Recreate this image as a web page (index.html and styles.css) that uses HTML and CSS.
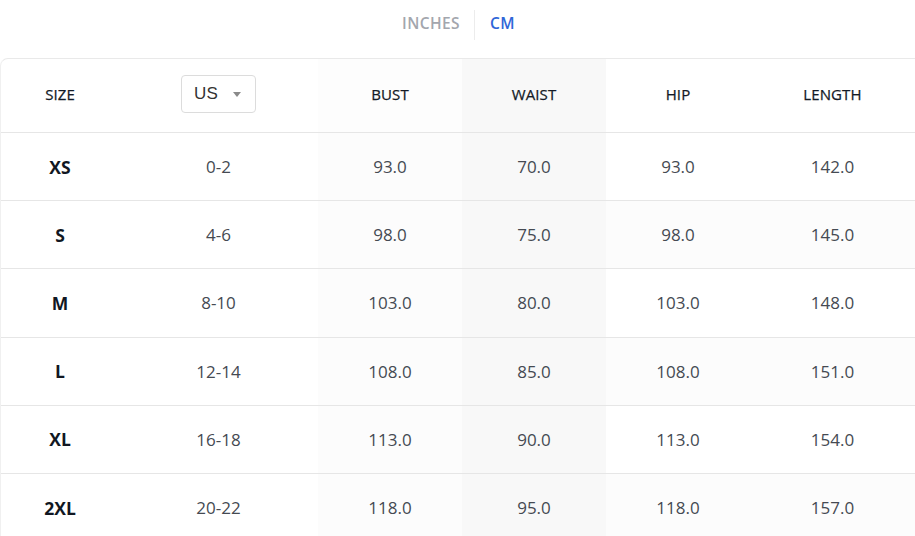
FILE: index.html
```html
<!DOCTYPE html>
<html>
<head>
<meta charset="utf-8">
<link rel="stylesheet" href="styles.css">
</head>
<body>
<div class="units">
  <span class="unit">INCHES</span>
  <span class="sep"></span>
  <span class="unit active">CM</span>
</div>
<div class="table">
  <div class="row head">
    <div class="cell">SIZE</div>
    <div class="cell">
      <div class="select"><span>US</span><svg class="caret" width="8" height="5" viewBox="0 0 8 5"><path d="M0 0h8L4 5z" fill="#8a8a8a"/></svg></div>
    </div>
    <div class="cell bust">BUST</div>
    <div class="cell waist">WAIST</div>
    <div class="cell">HIP</div>
    <div class="cell">LENGTH</div>
  </div>
  <div class="row">
    <div class="cell size">XS</div><div class="cell">0-2</div><div class="cell bust">93.0</div><div class="cell waist">70.0</div><div class="cell">93.0</div><div class="cell">142.0</div>
  </div>
  <div class="row alt">
    <div class="cell size">S</div><div class="cell">4-6</div><div class="cell bust">98.0</div><div class="cell waist">75.0</div><div class="cell">98.0</div><div class="cell">145.0</div>
  </div>
  <div class="row">
    <div class="cell size">M</div><div class="cell">8-10</div><div class="cell bust">103.0</div><div class="cell waist">80.0</div><div class="cell">103.0</div><div class="cell">148.0</div>
  </div>
  <div class="row alt">
    <div class="cell size">L</div><div class="cell">12-14</div><div class="cell bust">108.0</div><div class="cell waist">85.0</div><div class="cell">108.0</div><div class="cell">151.0</div>
  </div>
  <div class="row">
    <div class="cell size">XL</div><div class="cell">16-18</div><div class="cell bust">113.0</div><div class="cell waist">90.0</div><div class="cell">113.0</div><div class="cell">154.0</div>
  </div>
  <div class="row alt">
    <div class="cell size">2XL</div><div class="cell">20-22</div><div class="cell bust">118.0</div><div class="cell waist">95.0</div><div class="cell">118.0</div><div class="cell">157.0</div>
  </div>
</div>
</body>
</html>
```
FILE: styles.css
```css
* { box-sizing: border-box; }
html, body { margin: 0; padding: 0; background: #fff; }
body { font-family: "Open Sans", "Noto Sans", sans-serif; color: #222; overflow: hidden; }

.units {
  height: 58px;
  display: flex;
  align-items: center;
  justify-content: center;
  padding-bottom: 13px;
  padding-left: 2px;
}
.unit {
  font-size: 15.5px;
  font-weight: 600;
  letter-spacing: 0.4px;
  color: #a3a6ad;
}
.unit.active { color: #2f66d8; }
.sep {
  width: 1px;
  height: 30px;
  background: #ececec;
  margin: 4px 15px 0 14px;
}

.table {
  border-top: 1px solid #e9e9e9;
  border-left: 1px solid #f0f0f0;
  border-top-left-radius: 8px;
}
.row {
  display: grid;
  grid-template-columns: 118px 199px 144px 144px 144px 165px;
  height: 68.2px;
  border-top: 1px solid #e6e6e6;
}
.row.head { height: 73px; border-top: 0; }
.cell {
  display: flex;
  align-items: center;
  justify-content: center;
  font-size: 17px;
  color: #454a52;
}
.head .cell {
  font-size: 15px;
  font-weight: 500;
  color: #131a26;
  letter-spacing: 0.1px;
  -webkit-text-stroke: 0.25px #131a26;
  padding-bottom: 3px;
}
.cell.size {
  font-weight: 700;
  color: #111722;
  font-size: 17.5px;
}
.cell.bust { background: #fcfcfc; }
.head .cell.bust { background: #fdfdfd; }
.cell.waist { background: #f8f8f8; }
.alt .cell:nth-child(5), .alt .cell:nth-child(6) { background: #fcfcfc; }

.select {
  width: 75px;
  height: 38px;
  border: 1px solid #dcdcdc;
  border-radius: 4px;
  display: flex;
  align-items: center;
  justify-content: space-between;
  padding: 0 14px 0 12px;
  font-family: "Liberation Sans", Arial, sans-serif;
  font-size: 17px;
  font-weight: 400;
  color: #333;
  -webkit-text-stroke: 0;
}
.caret { margin-top: 1px; }
```
